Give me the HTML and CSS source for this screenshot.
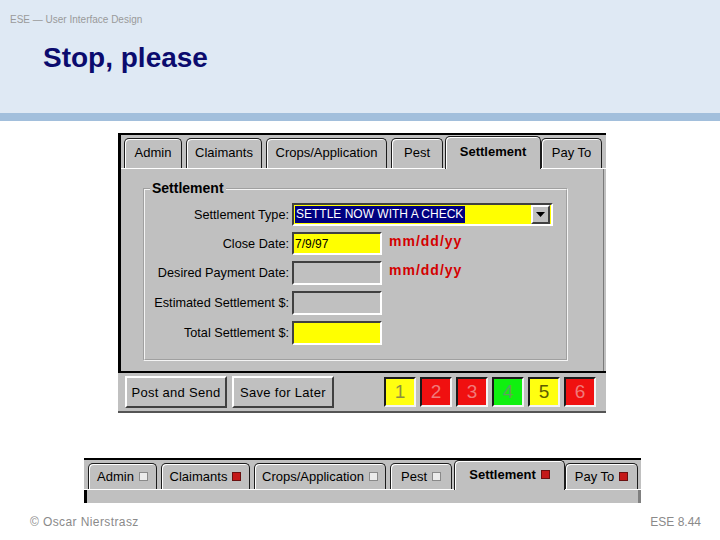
FILE: index.html
```html
<!DOCTYPE html>
<html>
<head>
<meta charset="utf-8">
<link rel="stylesheet" href="styles.css">
</head>
<body>
<div class="page">
  <header class="header">
    <div class="sub">ESE — User Interface Design</div>
    <h1 class="title">Stop, please</h1>
  </header>
  <div class="stripe"></div>

  <div class="win1">
    <div class="upper">
      <div class="tabrow">
        <div class="tab t-admin">Admin</div>
        <div class="tab t-claim">Claimants</div>
        <div class="tab t-crops">Crops/Application</div>
        <div class="tab t-pest">Pest</div>
        <div class="tab active t-settle">Settlement</div>
        <div class="tab t-pay">Pay To</div>
      </div>
      <div class="panel">
        <fieldset class="group">
          <legend class="legend">Settlement</legend>
          <div class="form">
            <div class="lbl">Settlement Type:</div>
            <div class="combo field yellow">
              <span class="sel">SETTLE NOW WITH A CHECK</span>
              <span class="ddbtn"><svg width="9" height="5" viewBox="0 0 9 5"><polygon points="0,0 9,0 4.5,5" fill="#000"/></svg></span>
            </div>

            <div class="lbl">Close Date:</div>
            <div class="field date yellow"><span class="val">7/9/97</span></div>
            <div class="hint">mm/dd/yy</div>

            <div class="lbl">Desired Payment Date:</div>
            <div class="field date"></div>
            <div class="hint">mm/dd/yy</div>

            <div class="lbl">Estimated Settlement $:</div>
            <div class="field date"></div>
            <div></div>

            <div class="lbl">Total Settlement $:</div>
            <div class="field date yellow"></div>
            <div></div>
          </div>
        </fieldset>
      </div>
    </div>
    <div class="btnrow">
      <div class="btn">Post and Send</div>
      <div class="btn">Save for Later</div>
      <div class="boxes">
        <div class="nbox yel n1">1</div>
        <div class="nbox red">2</div>
        <div class="nbox red">3</div>
        <div class="nbox grn">4</div>
        <div class="nbox yel n5">5</div>
        <div class="nbox red">6</div>
      </div>
    </div>
  </div>

  <div class="win2">
    <div class="tabrow2">
      <div class="tab2 u-admin">Admin <span class="ind off"></span></div>
      <div class="tab2 u-claim">Claimants <span class="ind on"></span></div>
      <div class="tab2 u-crops">Crops/Application <span class="ind off"></span></div>
      <div class="tab2 u-pest">Pest <span class="ind off"></span></div>
      <div class="tab2 active u-settle">Settlement <span class="ind on"></span></div>
      <div class="tab2 u-pay">Pay To <span class="ind on"></span></div>
    </div>
    <div class="panel2"></div>
  </div>

  <footer class="footer">
    <span class="copy">© Oscar Nierstrasz</span>
    <span>ESE 8.44</span>
  </footer>
</div>
</body>
</html>
```
FILE: styles.css
```css
* { box-sizing: border-box; }
html, body { margin: 0; padding: 0; }
body {
  width: 720px;
  height: 540px;
  overflow: hidden;
  background: #fff;
  font-family: "Liberation Sans", Arial, sans-serif;
}
.page { width: 720px; height: 540px; }

.header {
  height: 113px;
  background: #dfe9f4;
  padding-top: 14px;
}
.sub {
  margin-left: 10px;
  font-size: 10px;
  line-height: 12px;
  color: #9a9a9a;
}
.title {
  margin: 16px 0 0 43px;
  font-size: 28px;
  line-height: 32px;
  font-weight: bold;
  color: #0b0b6e;
}
.stripe { height: 8px; background: #a2bfdc; }

/* ---------- first window ---------- */
.win1 {
  width: 488px;
  margin: 12px 0 0 118px;
  background: #c0c0c0;
  border-top: 2px solid #000;
  border-bottom: 2px solid #555;
  font-size: 12px;
  color: #000;
}
.upper {
  border-left: 3px solid #000;
  border-bottom: 2px solid #000;
}
.tabrow {
  display: flex;
  align-items: flex-end;
  height: 34px;
  gap: 4px;
  padding-left: 3px;
  background: linear-gradient(to top, #fff 0, #fff 1px, transparent 1px);
}
.tab {
  height: 30px;
  margin-bottom: 1px;
  padding-bottom: 3px;
  border: 1px solid #1c1c1c;
  border-bottom: none;
  border-radius: 5px 5px 0 0;
  box-shadow: inset 1px 1px 0 #fff;
  background: #c0c0c0;
  display: flex;
  align-items: center;
  justify-content: center;
  font-size: 13px;
  white-space: nowrap;
}
.tab.active {
  height: 33px;
  margin-bottom: 0;
  font-weight: bold;
  padding-bottom: 4px;
}
.t-admin { width: 58px; }
.t-claim { width: 76px; }
.t-crops { width: 121px; }
.t-pest { width: 52px; }
.t-settle { width: 96px; margin-left: -2px; margin-right: -4px; }
.t-pay { width: 61px; }

.panel {
  height: 202px;
  padding: 12px 0 0 22px;
  border-right: 1px solid #7a7a7a;
  margin-right: 2px;
}
.group {
  width: 425px;
  height: 180px;
  margin: 0;
  padding: 0;
  border: 2px groove #f4f4f4;
  min-inline-size: 0;
}
.legend {
  margin-left: 5px;
  padding: 0 2px;
  font-size: 14px;
  font-weight: bold;
  line-height: 15px;
}
.form {
  display: grid;
  grid-template-columns: 147px 90px 180px;
  grid-template-rows: 23px 23px 24px 24px 24px;
  row-gap: 6px;
  padding-top: 7px;
}
.lbl {
  text-align: right;
  padding-right: 3px;
  align-self: center;
  font-size: 12.7px;
  white-space: nowrap;
}
.field {
  border-style: solid;
  border-width: 2px;
  border-color: #404040 #fff #fff #404040;
  background: #c0c0c0;
}
.yellow { background: #ffff00; }
.combo {
  grid-column: 2 / span 2;
  width: 261px;
  display: flex;
  align-items: center;
  padding-left: 1px;
}
.sel {
  background: #000080;
  color: #fff;
  font-size: 12px;
  line-height: 17px;
  padding: 0 1px;
  width: 170px;
  white-space: nowrap;
}
.ddbtn {
  margin-left: auto;
  margin-right: 1px;
  width: 19px;
  height: 19px;
  background: #c0c0c0;
  border-style: solid;
  border-width: 2px;
  border-color: #fff #404040 #404040 #fff;
  display: flex;
  align-items: center;
  justify-content: center;
}
.date { width: 90px; display: flex; align-items: center; }
.val { font-size: 12px; padding-left: 1px; }
.hint {
  color: #d40000;
  font-weight: bold;
  font-size: 14px;
  letter-spacing: 1px;
  padding-left: 7px;
  line-height: 16px;
  margin-top: 1px;
}

.btnrow {
  height: 38px;
  display: flex;
  align-items: center;
  padding-left: 7px;
}
.btn {
  width: 102px;
  height: 32px;
  margin-right: 5px;
  border-style: solid;
  border-width: 2px;
  border-color: #fff #404040 #404040 #fff;
  display: flex;
  align-items: center;
  justify-content: center;
  font-size: 13px;
  letter-spacing: 0.3px;
}
.boxes {
  display: flex;
  gap: 4px;
  margin-left: 45px;
}
.nbox {
  width: 32px;
  height: 30px;
  border-style: solid;
  border-width: 2px;
  border-color: #1a1a1a #f4f4f4 #f4f4f4 #1a1a1a;
  display: flex;
  align-items: center;
  justify-content: center;
  font-size: 19px;
}
.yel { background: #ffff10; }
.red { background: #f01010; color: #f07a7a; }
.grn { background: #10f010; color: #60a060; }
.n1 { color: #8e8e40; }
.n5 { color: #5e5e00; }

/* ---------- second window ---------- */
.win2 {
  width: 557px;
  height: 45px;
  margin: 45px 0 0 84px;
  background: #c0c0c0;
  border-top: 2px solid #000;
}
.tabrow2 {
  display: flex;
  align-items: flex-end;
  height: 30px;
  gap: 4px;
  padding-left: 4px;
  background: linear-gradient(to top, #fff 0, #fff 1px, transparent 1px);
}
.tab2 {
  height: 26px;
  margin-bottom: 1px;
  padding-bottom: 1px;
  border: 1px solid #1c1c1c;
  border-bottom: none;
  border-radius: 5px 5px 0 0;
  box-shadow: inset 1px 1px 0 #fff;
  background: #c0c0c0;
  display: flex;
  align-items: center;
  justify-content: center;
  gap: 5px;
  font-size: 13px;
  white-space: nowrap;
}
.tab2.active {
  height: 30px;
  margin-bottom: 0;
  font-weight: bold;
  padding-bottom: 3px;
}
.u-admin { width: 69px; }
.u-claim { width: 89px; }
.u-crops { width: 132px; }
.u-pest { width: 62px; }
.u-settle { width: 111px; margin-left: -2px; margin-right: -4px; }
.u-pay { width: 73px; }
.ind {
  display: inline-block;
  width: 9px;
  height: 9px;
  border: 1px solid #888;
}
.ind.off { background: #ececec; border-color: #8a8a8a; }
.ind.on { background: #c41818; border-color: #6a1010; }
.panel2 {
  height: 13px;
  border-left: 3px solid #000;
  border-right: 3px solid #808080;
}

.footer {
  margin-top: 12px;
  display: flex;
  justify-content: space-between;
  padding: 0 19px 0 30px;
  font-size: 12px;
  line-height: 14px;
  color: #8a8a8a;
}
.copy { letter-spacing: 0.4px; }
```
